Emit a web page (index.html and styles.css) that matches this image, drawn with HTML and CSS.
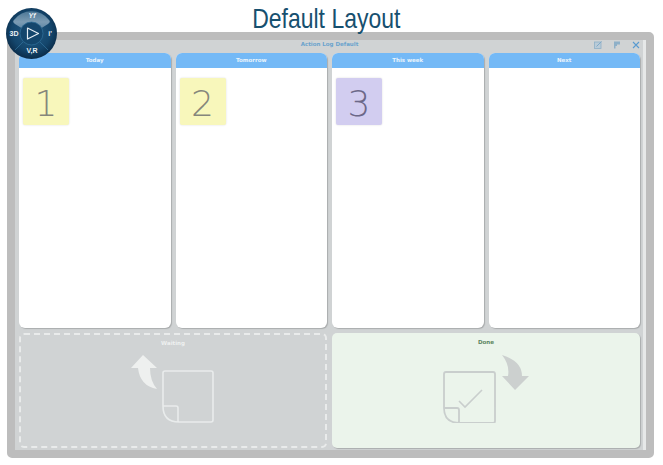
FILE: index.html
```html
<!DOCTYPE html>
<html lang="en">
<head>
  <meta charset="UTF-8" />
  <title>Default Layout</title>
  <link rel="stylesheet" href="styles.css">
</head>
<body>
  <!-- Round play badge, sits over the corner of the board -->
  <div class="badge">
    <svg viewBox="0 0 51 51" width="51" height="51">
      <defs>
        <radialGradient id="disc" cx="50%" cy="45%" r="55%">
          <stop offset="0" stop-color="#245d86" />
          <stop offset="0.7" stop-color="#14466c" />
          <stop offset="1" stop-color="#0b2c49" />
        </radialGradient>
        <linearGradient id="lens" x1="0" y1="0" x2="0" y2="1">
          <stop offset="0" stop-color="#4d7896" />
          <stop offset="0.6" stop-color="#7c9cb4" />
          <stop offset="1" stop-color="#5d86a4" />
        </linearGradient>
      </defs>
      <circle cx="25.5" cy="25.5" r="25.5" fill="url(#disc)" />
      <path d="M8 12 A22 22 0 0 1 43 12 Q45 14 42 16 L34 21 A11 11 0 0 0 17 21 L9 16 Q6 14 8 12Z" fill="url(#lens)" />
      <circle cx="25.5" cy="25.5" r="11.5" fill="#14466c" stroke="#2f6d97" stroke-width="0.8" />
      <path d="M34 34 L42 42 M17 34 L9 42" stroke="#2f6d97" stroke-width="0.8" />
      <path d="M21.5 20 L32.5 25.5 L21.5 31Z" fill="none" stroke="#e6eef4" stroke-width="1.2" stroke-linejoin="round" />
      <text x="26" y="10" class="badge-text top">Yf</text>
      <text x="8" y="28" class="badge-text">3D</text>
      <text x="44" y="28" class="badge-text">i'</text>
      <text x="26" y="45" class="badge-text">V,R</text>
    </svg>
  </div>

  <h1 class="page-title"><span class="page-title-text">Default Layout</span></h1>

  <div class="frame">
    <div class="board">
      <div class="board-bar">
        <span class="board-name">Action Log Default</span>
        <div class="board-tools">
          <svg viewBox="0 0 8 8" width="8" height="8">
            <rect x="0.5" y="1" width="6.5" height="6.5" fill="#b9cbd8" stroke="#8eb0c8" stroke-width="0.8" />
            <path d="M2.5 5.5 L7.5 0.5" stroke="#7fa9c8" stroke-width="1" />
          </svg>
          <svg viewBox="0 0 8 8" width="8" height="8">
            <path d="M1 0.5 H7 V3.5 H4 V5 H2.5 V7.5 H1Z" fill="#8eb0c8" />
          </svg>
          <svg viewBox="0 0 8 8" width="8" height="8">
            <path d="M1 1 L7 7 M7 1 L1 7" stroke="#5a9bd0" stroke-width="1.1" />
          </svg>
        </div>
      </div>

      <div class="columns">
        <section class="column">
          <h2 class="column-head">Today</h2>
          <div class="column-body">
            <div class="sticky yellow">1</div>
          </div>
        </section>
        <section class="column">
          <h2 class="column-head">Tomorrow</h2>
          <div class="column-body">
            <div class="sticky yellow">2</div>
          </div>
        </section>
        <section class="column">
          <h2 class="column-head">This week</h2>
          <div class="column-body">
            <div class="sticky violet">3</div>
          </div>
        </section>
        <section class="column">
          <h2 class="column-head">Next</h2>
          <div class="column-body"></div>
        </section>
      </div>

      <div class="zones">
        <section class="zone waiting">
          <h2 class="zone-label">Waiting</h2>
          <svg class="zone-icon" viewBox="0 0 84 68" width="84" height="68">
            <path d="M12 0 L26 13 H19 Q19 26 26 34 Q9 31 7 13 H0Z" fill="#eef0ef" />
            <path d="M34 16 H80 Q82 16 82 18 V65 Q82 67 80 67 H48 Q32 67 32 51 V18 Q32 16 34 16Z M32 51 H45 Q47 51 47 53 V67" fill="none" stroke="#e9ecec" stroke-width="1.6" />
          </svg>
        </section>
        <section class="zone done">
          <h2 class="zone-label">Done</h2>
          <svg class="zone-icon" viewBox="0 0 86 68" width="86" height="68">
            <path d="M59 0 Q79 6 79 21 H86 L72 35 L59 21 H65 Q67 10 59 0Z" fill="#ccd0cf" />
            <path d="M3 17 H50 Q52 17 52 19 V66 Q52 68 50 68 H17 Q1 68 1 53 V19 Q1 17 3 17Z M1 53 H14 Q16 53 16 55 V68" fill="none" stroke="#c9cecd" stroke-width="1.8" />
            <path d="M16 46 L22 52 L39 35" fill="none" stroke="#c9cecd" stroke-width="1.6" />
          </svg>
        </section>
      </div>
    </div>
  </div>
</body>
</html>
```

FILE: styles.css
```css
/* Page */
html, body {
  margin: 0;
  padding: 0;
}
body {
  position: relative;
  width: 663px;
  height: 465px;
  overflow: hidden;
  background-color: #fff;
  font-family: 'DejaVu Sans', sans-serif;
}
.page-title {
  margin: 0;
  height: 32px;
  padding-right: 10px;
  text-align: center;
  font-family: 'Liberation Sans', sans-serif;
  font-size: 28px;
  font-weight: normal;
  line-height: 37px;
  color: #17506f;
}
/* No narrow face installed, so squeeze the regular one */
.page-title-text {
  display: inline-block;
  transform: scaleX(0.82);
}
.badge {
  position: absolute;
  left: 6px;
  top: 8px;
  width: 51px;
  height: 51px;
  z-index: 2;
}
.badge svg {
  display: block;
}
.badge-text {
  font-family: 'Liberation Sans', sans-serif;
  font-size: 7px;
  font-weight: bold;
  fill: #eef3f6;
  text-anchor: middle;
}
.badge-text.top {
  font-style: italic;
}
/* Board */
.frame {
  box-sizing: border-box;
  width: 647px;
  height: 426px;
  margin-left: 7px;
  border: 8px solid #bdbdbd;
  border-radius: 5px;
}
.board {
  box-sizing: border-box;
  height: 100%;
  padding: 0 3px 2px 4px;
  background-color: #d0d3d4;
  border-right: 3px solid #e6e8e8;
  display: flex;
  flex-direction: column;
}
.board-bar {
  position: relative;
  flex: 0 0 13px;
  text-align: center;
}
.board-name {
  display: block;
  font-size: 5.5px;
  font-weight: bold;
  line-height: 8px;
  color: #6ba3cd;
}
.board-tools {
  position: absolute;
  right: 0;
  top: 1px;
  display: flex;
  gap: 11px;
}
.board-tools svg {
  display: block;
}
/* Columns */
.columns {
  flex: 0 0 275px;
  display: grid;
  grid-template-columns: repeat(4, 1fr);
  gap: 5px;
}
.column {
  display: flex;
  flex-direction: column;
  background-color: #fff;
  border-radius: 6px;
  overflow: hidden;
  box-shadow: 1px 1px 1px #a9acad;
}
.column-head {
  margin: 0;
  flex: 0 0 15px;
  background-color: #74b9f6;
  color: #eaf4fc;
  font-size: 5.5px;
  font-weight: bold;
  line-height: 15px;
  text-align: center;
}
.column-body {
  flex: 1;
  padding: 10px 4px;
}
/* Sticky notes */
.sticky {
  width: 46px;
  height: 47px;
  border-radius: 2px;
  box-shadow: 0 0 2px #d8d8d8;
  font-size: 36px;
  font-weight: 200;
  line-height: 52px;
  text-align: center;
  color: #85867c;
}
.yellow {
  background-color: #f8f7bb;
}
.violet {
  background-color: #d2cdf0;
  color: #6c6888;
}
/* Waiting and Done */
.zones {
  flex: 1;
  margin-top: 5px;
  display: grid;
  grid-template-columns: 1fr 1fr;
  gap: 5px;
}
.zone {
  box-sizing: border-box;
  display: flex;
  flex-direction: column;
  align-items: center;
  border-radius: 5px;
}
.zone-label {
  margin: 0;
  font-size: 5.5px;
  font-weight: bold;
  line-height: 8px;
}
.zone-icon {
  display: block;
  margin-top: 9px;
}
.waiting {
  border: 2px dashed #e9ebeb;
  padding-top: 4px;
}
.waiting .zone-label {
  color: #eef0f0;
}
.waiting .zone-icon {
  margin-top: 8px;
}
.done {
  background-color: #ebf4eb;
  box-shadow: 1px 1px 1px #a9acad;
  padding-top: 5px;
}
.done .zone-label {
  color: #5d8560;
}
```
